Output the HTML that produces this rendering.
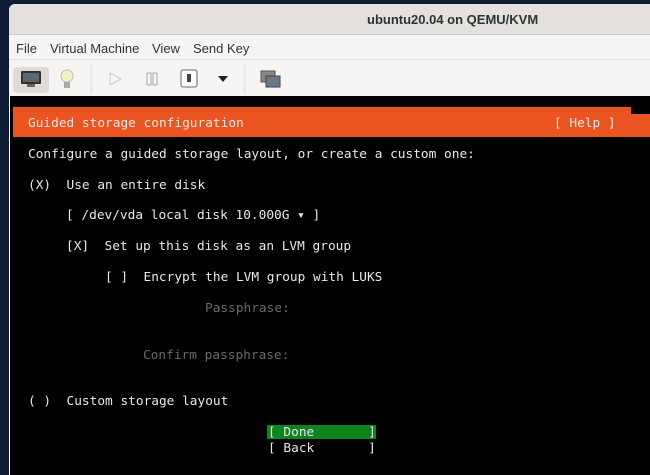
<!DOCTYPE html>
<html><head><meta charset="utf-8"><style>
*{margin:0;padding:0;box-sizing:border-box}
html,body{width:650px;height:475px;overflow:hidden}
body{background:#0d1b33;position:relative;font-family:"Liberation Sans","DejaVu Sans",sans-serif}
.win{position:absolute;left:9px;top:4px;width:641px;height:471px;background:#f6f5f4;border-radius:6px 0 0 0;overflow:hidden}
.title{position:absolute;left:0;top:0;width:100%;height:31px;background:#e3e0dd;border-bottom:1px solid #cfcac5;color:#2e3436}
.title span{position:absolute;left:358px;top:8px;font-weight:bold;font-size:13px}
.menu{position:absolute;top:32px;left:0;width:100%;height:24px;font-size:13px;color:#2e3436;border-bottom:1px solid #e2dfdc}
.menu span{position:absolute;top:5px}
.tb{position:absolute;top:57px;left:0;width:100%;height:35px}
.term{position:absolute;left:10px;top:96px;width:640px;height:379px;background:#000}
.t{position:absolute;font-family:"DejaVu Sans Mono","Liberation Mono",monospace;font-size:12.8px;color:#e8e8e8;white-space:pre;line-height:15px}
.g{color:#6a6a6a}
</style></head><body>
<div class="win">
<div class="title"><span>ubuntu20.04 on QEMU/KVM</span></div>
<div class="menu"><span style="left:7px">File</span><span style="left:41px">Virtual Machine</span><span style="left:143px">View</span><span style="left:184px">Send Key</span></div>
<div class="tb">
<div style="position:absolute;left:4px;top:6px;width:36px;height:26px;background:#dedbd8;border-radius:4px"></div>
<svg style="position:absolute;left:0;top:0" width="300" height="35">
<rect x="12" y="10" width="20" height="13" fill="#333" rx="1"/><rect x="14" y="12" width="16" height="9" fill="#5c6770"/><rect x="18" y="23" width="8" height="3" fill="#666"/>
<circle cx="58" cy="15" r="6" fill="#f4f1c0" stroke="#bbb"/><rect x="55" y="21" width="6" height="6" fill="#aaa"/>
<line x1="82" y1="4" x2="82" y2="33" stroke="#ddd"/>
<path d="M101 12 L112 18 L101 24Z" fill="none" stroke="#ccc"/>
<rect x="138" y="12" width="4" height="12" fill="none" stroke="#aaa"/><rect x="144" y="12" width="4" height="12" fill="none" stroke="#aaa"/>
<rect x="172" y="9" width="16" height="17" rx="2" fill="#fff" stroke="#666"/><rect x="178" y="13" width="4" height="8" fill="#444"/>
<path d="M209 15 L219 15 L214 21Z" fill="#222"/>
<line x1="236" y1="4" x2="236" y2="33" stroke="#ddd"/>
<rect x="252" y="10" width="14" height="11" fill="#888" stroke="#555"/><rect x="257" y="15" width="14" height="11" fill="#6b7a86" stroke="#444"/>
</svg></div>
</div>
<div class="term"></div>
<div style="position:absolute;left:13px;top:107px;width:618px;height:30px;background:#e95420"></div>
<div style="position:absolute;left:631px;top:114px;width:19px;height:23px;background:#e95420"></div>
<div class="t" style="left:28px;top:116px">Guided storage configuration</div>
<div class="t" style="left:554px;top:116px">[ Help ]</div>
<div class="t" style="left:28px;top:147px">Configure a guided storage layout, or create a custom one:</div>
<div class="t" style="left:28px;top:178px">(X)  Use an entire disk</div>
<div class="t" style="left:66px;top:208px">[ /dev/vda local disk 10.000G ▾ ]</div>
<div class="t" style="left:66px;top:239px">[X]  Set up this disk as an LVM group</div>
<div class="t" style="left:105px;top:270px">[ ]  Encrypt the LVM group with LUKS</div>
<div class="t g" style="left:205px;top:301px">Passphrase:</div>
<div class="t g" style="left:143px;top:348px">Confirm passphrase:</div>
<div class="t" style="left:28px;top:394px">( )  Custom storage layout</div>
<div style="position:absolute;left:267px;top:425px;width:109px;height:14px;background:#0e8420"></div>
<div class="t" style="left:268px;top:425px">[ Done       ]</div>
<div class="t" style="left:268px;top:441px">[ Back       ]</div>
</body></html>
